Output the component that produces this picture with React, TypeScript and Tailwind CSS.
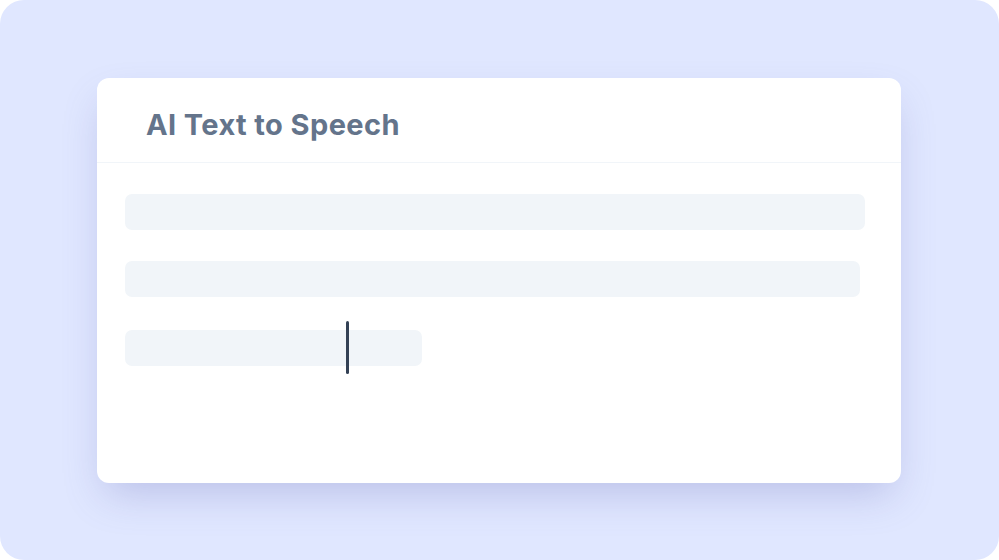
import React from "react";

const App: React.FC = () => {
    return (
        <div className="w-[999px] h-[560px] bg-white" style={{ fontFamily: "Inter, 'Noto Sans', sans-serif" }}>
            <div className="w-full h-full rounded-[24px] bg-[#e0e7ff] pt-[78px] pl-[97px]">
                <div className="w-[804px] h-[405px] bg-white rounded-[12px] shadow-[0_18px_40px_-8px_rgba(99,102,180,0.30)] flex flex-col">
                    {/* Header */}
                    <div className="h-[85px] border-b border-[#f1f5f9] flex items-center pl-[49px]">
                        <h1 className="text-[29px] font-bold text-[#64748b] tracking-[0.4px] leading-none mt-[8px]">AI Text to Speech</h1>
                    </div>

                    {/* Skeleton lines */}
                    <div className="flex flex-col pt-[31px] pl-[28px]">
                        <div className="w-[740px] h-[36px] rounded-[7px] bg-[#f1f5f9]" />
                        <div className="w-[735px] h-[36px] rounded-[7px] bg-[#f1f5f9] mt-[31px]" />
                        <div className="relative w-[297px] h-[36px] rounded-[7px] bg-[#f1f5f9] mt-[33px]">
                            <div className="absolute left-[221px] top-[-9px] w-[3px] h-[53px] rounded-full bg-[#334155]" />
                        </div>
                    </div>
                </div>
            </div>
        </div>
    );
};

export default App;
